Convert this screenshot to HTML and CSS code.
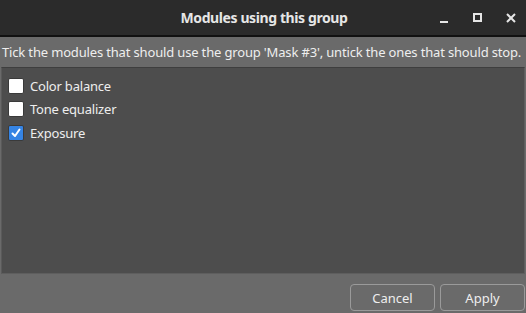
FILE: index.html
```html
<!DOCTYPE html>
<html>
<head>
<meta charset="utf-8">
<link rel="stylesheet" href="styles.css">
</head>
<body>
<div class="window">
  <div class="titlebar">
    <div class="title">Modules using this group</div>
    <div class="controls">
      <span class="ctl min"><svg width="12" height="12" viewBox="0 0 12 12"><rect x="1" y="9" width="8" height="2" fill="#e6e6e6"/></svg></span>
      <span class="ctl max"><svg width="12" height="12" viewBox="0 0 12 12"><rect x="2" y="2" width="7" height="7" fill="none" stroke="#e6e6e6" stroke-width="2"/></svg></span>
      <span class="ctl close"><svg width="12" height="12" viewBox="0 0 12 12"><path d="M2 2 L10 10 M10 2 L2 10" stroke="#e6e6e6" stroke-width="2"/></svg></span>
    </div>
  </div>
  <div class="content">
    <div class="desc">Tick the modules that should use the group 'Mask #3', untick the ones that should stop.</div>
    <div class="frame">
      <label class="row"><span class="box"></span><span class="lbl">Color balance</span></label>
      <label class="row"><span class="box"></span><span class="lbl">Tone equalizer</span></label>
      <label class="row"><span class="box checked"><svg width="12" height="12" viewBox="0 0 12 12"><path d="M2.5 6.5 L5 9 L9.5 2.5" fill="none" stroke="#fff" stroke-width="2" stroke-linecap="round" stroke-linejoin="round"/></svg></span><span class="lbl">Exposure</span></label>
    </div>
    <div class="buttons">
      <button class="btn">Cancel</button>
      <button class="btn">Apply</button>
    </div>
  </div>
</div>
</body>
</html>
```
FILE: styles.css
```css
html, body {
  margin: 0;
  padding: 0;
  background: #6a6a6a;
}
body {
  font-family: "Noto Sans", "DejaVu Sans", sans-serif;
  color: #eeeeee;
  width: 526px;
  height: 313px;
  overflow: hidden;
}
.window {
  display: flex;
  flex-direction: column;
  height: 313px;
}
.titlebar {
  height: 35px;
  flex: none;
  background: #2b2b2b;
  border-bottom: 2px solid #111;
  display: flex;
  align-items: center;
  justify-content: center;
  position: relative;
}
.title {
  font-weight: bold;
  font-size: 14px;
  letter-spacing: -0.4px;
  color: #e6e6e6;
  padding-left: 2px;
}
.controls {
  position: absolute;
  right: 0;
  top: 0;
  height: 35px;
  display: flex;
  align-items: center;
}
.ctl {
  width: 12px;
  height: 12px;
  display: flex;
  margin-right: 21px;
}
.ctl.close { margin-right: 9px; }
.content {
  flex: 1;
  display: flex;
  flex-direction: column;
  padding: 0 1px 2px 1px;
  min-height: 0;
}
.desc {
  font-size: 13px;
  letter-spacing: -0.16px;
  height: 30px;
  line-height: 30px;
  padding-left: 1px;
  white-space: nowrap;
  flex: none;
}
.frame {
  flex: 1;
  background: #4d4d4d;
  border: 1px solid #5e5e5e;
  border-top-color: #3e3e3e;
  border-left-color: #5a5a5a;
  padding-top: 6px;
  box-sizing: border-box;
}
.row {
  display: flex;
  align-items: center;
  height: 23.5px;
  padding-left: 6px;
}
.box {
  width: 14px;
  height: 14px;
  background: #ffffff;
  border: 1px solid #3a3a3a;
  border-radius: 2px;
  display: flex;
  align-items: center;
  justify-content: center;
}
.box.checked {
  background: #3584e4;
}
.lbl {
  font-size: 13px;
  letter-spacing: -0.2px;
  margin-left: 6px;
  color: #eeeeee;
}
.buttons {
  display: flex;
  flex: none;
  justify-content: flex-end;
  gap: 5px;
  margin-top: 10px;
}
.btn {
  width: 85px;
  height: 27px;
  background: #6a6a6a;
  border: 1px solid #9a9a9a;
  border-radius: 4px;
  color: #eeeeee;
  font-family: "Noto Sans", "DejaVu Sans", sans-serif;
  font-size: 13px;
  padding: 0;
}
```
